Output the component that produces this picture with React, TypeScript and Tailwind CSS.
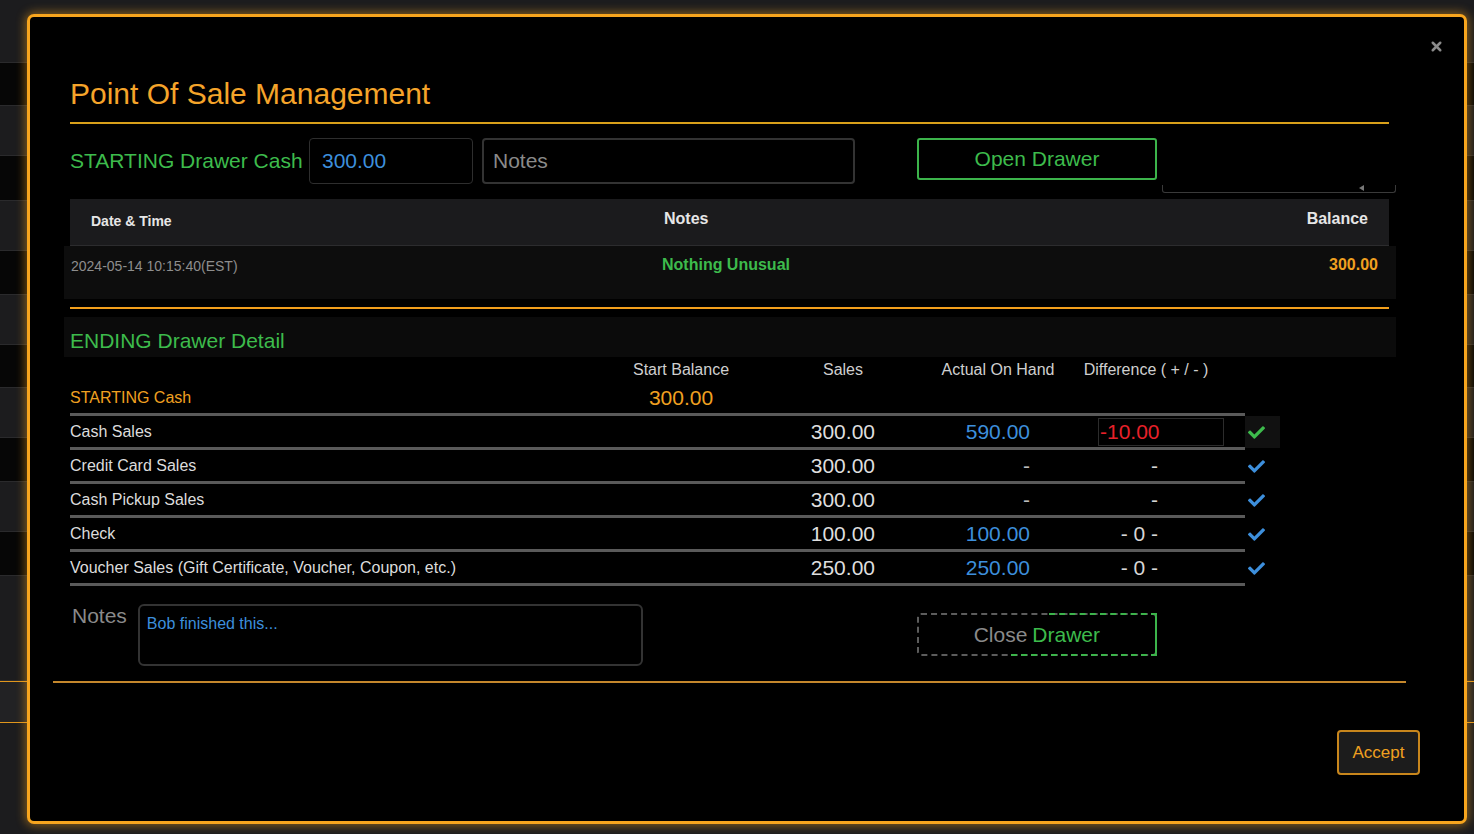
import { X } from "lucide-react";
import { FaCheck } from "react-icons/fa";

type Line = {
  label: string;
  sales: string;
  actual: string;
  diff: string;
  editing?: boolean;
};

const lines: Line[] = [
  { label: "Cash Sales", sales: "300.00", actual: "590.00", diff: "-10.00", editing: true },
  { label: "Credit Card Sales", sales: "300.00", actual: "-", diff: "-" },
  { label: "Cash Pickup Sales", sales: "300.00", actual: "-", diff: "-" },
  { label: "Check", sales: "100.00", actual: "100.00", diff: "- 0 -" },
  {
    label: "Voucher Sales (Gift Certificate, Voucher, Coupon, etc.)",
    sales: "250.00",
    actual: "250.00",
    diff: "- 0 -",
  },
];

// rows of the page sitting behind the modal
const bgRows = [63, 43, 50, 45, 50, 44, 50, 43, 50, 44, 50, 44, 105];

export default function App() {
  return (
    <div className="relative h-[834px] w-[1474px] overflow-hidden bg-[#1c1c1e] font-['Liberation_Sans',Arial,sans-serif]">
      {/* background page */}
      <div className="flex flex-col">
        {bgRows.map((h, i) => (
          <div
            key={i}
            style={{ height: h }}
            className={`border-b border-[#2a2a2c] ${i % 2 === 0 ? "bg-[#1c1c1e]" : "bg-[#060606]"}`}
          />
        ))}
        <div className="h-px bg-[#e0961c]" />
        <div className="h-[40px] bg-[#222224]" />
        <div className="h-px bg-[#e0961c]" />
      </div>

      {/* modal */}
      <div className="absolute left-[27px] top-[14px] h-[810px] w-[1440px] rounded-[7px] border-[3px] border-[#f7a51e] bg-black shadow-[0_0_10px_2px_rgba(247,165,30,0.45)]">
        <button className="absolute right-[20px] top-[22px] text-[#8a8a8a]">
          <X size={15} strokeWidth={4} />
        </button>

        <div className="pl-[40px] pr-[75px] pt-[59px]">
          <h1 className="text-[30px] leading-[35px] text-[#f5a42a]">Point Of Sale Management</h1>
          <div className="mt-[11px] h-[2px] bg-[#d9a01a]" />

          {/* starting cash */}
          <div className="relative mt-[14px] flex h-[46px] items-center">
            <span className="w-[239px] text-[21px] text-[#3dbb4c]">STARTING Drawer Cash</span>
            <div className="flex h-[46px] w-[164px] items-center rounded-[4px] border border-[#2e2e2e] px-[12px] text-[21px] text-[#3d8fdc]">
              300.00
            </div>
            <div className="ml-[9px] flex h-[46px] w-[373px] items-center rounded-[4px] border-2 border-[#333] px-[9px] text-[21px] text-[#8a8a8a]">
              Notes
            </div>
            <button className="ml-[62px] h-[42px] w-[240px] self-start rounded-[3px] border-2 border-[#3cb44b] text-[21px] text-[#3dbb4c]">
              Open Drawer
            </button>
            <div className="absolute left-[1092px] top-[47px] h-[8px] w-[234px] rounded-b-[3px] border-x border-b border-[#3a3a3a]">
              <span className="absolute right-[31px] top-[0px] h-0 w-0 border-y-[3px] border-r-[5px] border-y-transparent border-r-[#777]" />
            </div>
          </div>

          {/* history table */}
          <div className="mt-[15px] flex h-[47px] items-start border-b border-[#2c2c2e] bg-[#1b1b1d] pl-[21px] pr-[21px]">
            <span className="mt-[12px] w-[573px] text-[14px] font-bold text-[#e6e6e6]">Date &amp; Time</span>
            <span className="mt-[8px] flex-1 text-[16px] font-bold text-[#e6e6e6]">Notes</span>
            <span className="mt-[8px] text-[16px] font-bold text-[#e6e6e6]">Balance</span>
          </div>
          <div className="-ml-[6px] -mr-[7px] flex h-[53px] items-start bg-[#0d0d0d] pl-[7px] pr-[18px]">
            <span className="mt-[10px] w-[591px] text-[14px] text-[#8e8e8e]">2024-05-14 10:15:40(EST)</span>
            <span className="mt-[7px] flex-1 text-[16px] font-bold text-[#3dbb4c]">Nothing Unusual</span>
            <span className="mt-[7px] text-[16px] font-bold text-[#f0a020]">300.00</span>
          </div>
          <div className="mt-[8px] h-[2px] bg-[#f29f1c]" />

          {/* ending detail */}
          <div className="-ml-[6px] -mr-[7px] mt-[8px] h-[40px] bg-[#0b0b0b] pl-[6px] pt-[12px] text-[21px] leading-[24px] text-[#3dbb4c]">
            ENDING Drawer Detail
          </div>

          <div className="mt-[4px] flex w-[1175px] text-[16px] leading-[18px] text-[#cfcfcf]">
            <span className="w-[532px]" />
            <span className="w-[158px] text-center">Start Balance</span>
            <span className="w-[166px] text-center">Sales</span>
            <span className="w-[144px] text-center">Actual On Hand</span>
            <span className="w-[152px] text-center">Difference ( + / - )</span>
          </div>

          <div className="flex h-[37px] w-[1175px] items-center border-b-[3px] border-[#5a5a5a] pt-[3px]">
            <span className="w-[532px] text-[16px] text-[#f0a020]">STARTING Cash</span>
            <span className="w-[158px] text-center text-[21px] text-[#f0a020]">300.00</span>
          </div>

          {lines.map((l) => (
            <div key={l.label} className="flex items-stretch">
              <div className="flex h-[34px] w-[1175px] items-center border-b-[3px] border-[#5a5a5a] pt-[1px]">
                <span className="w-[532px] text-[16px] text-[#dcdcdc]">{l.label}</span>
                <span className="w-[158px]" />
                <span className="w-[166px] pr-[51px] text-right text-[21px] text-[#dedede]">{l.sales}</span>
                <span
                  className={`w-[144px] pr-[40px] text-right text-[21px] ${
                    l.actual === "-" ? "text-[#bdbdbd]" : "text-[#3d8fdc]"
                  }`}
                >
                  {l.actual}
                </span>
                {l.editing ? (
                  <span className="ml-[28px] flex h-[28px] w-[126px] items-center border border-[#2c2c2c] pl-[1px] text-[21px] text-[#e8202a]">
                    {l.diff}
                  </span>
                ) : (
                  <span className="w-[152px] pr-[64px] text-right text-[21px] text-[#d6d6d6]">{l.diff}</span>
                )}
              </div>
              <div
                className={`flex h-[32px] w-[35px] items-center justify-start pl-[3px] ${
                  l.editing ? "bg-[#111]" : ""
                }`}
              >
                <FaCheck size={17} className={l.editing ? "text-[#3dbb4c]" : "text-[#3d8fdc]"} />
              </div>
            </div>
          ))}

          {/* closing notes */}
          <div className="mt-[18px] flex items-start">
            <span className="ml-[2px] text-[21px] leading-[24px] text-[#8a8a8a]">Notes</span>
            <div className="ml-[11px] h-[62px] w-[505px] rounded-[6px] border-2 border-[#333] px-[7px] pt-[6px] text-[16px] text-[#3d8fdc]">
              Bob finished this...
            </div>
            <button className="relative ml-[274px] mt-[9px] flex h-[43px] w-[240px] items-center justify-center rounded-[4px] border-2 border-dashed border-[#5c5c5c] text-[21px]">
              <span className="absolute -top-[2px] left-[130px] -right-[2px] border-t-2 border-dashed border-[#3cb44b]" />
              <span className="absolute -bottom-[2px] left-[92px] -right-[2px] border-b-2 border-dashed border-[#3cb44b]" />
              <span className="absolute -right-[2px] -top-[2px] -bottom-[2px] w-[4px] rounded-r-[4px] border-r-2 border-[#3cb44b]" />
              <span className="text-[#8a8a8a]">Close</span>
              <span className="ml-[5px] text-[#3dbb4c]">Drawer</span>
            </button>
          </div>

          <div className="-ml-[17px] -mr-[17px] mt-[15px] h-[2px] bg-[#c4872c]" />

          <div className="-mr-[31px] mt-[47px] flex justify-end">
            <button className="h-[45px] w-[83px] rounded-[4px] border-2 border-[#c8861c] bg-[#1c1c1c] text-[17px] text-[#f0a020]">
              Accept
            </button>
          </div>
        </div>
      </div>
    </div>
  );
}
